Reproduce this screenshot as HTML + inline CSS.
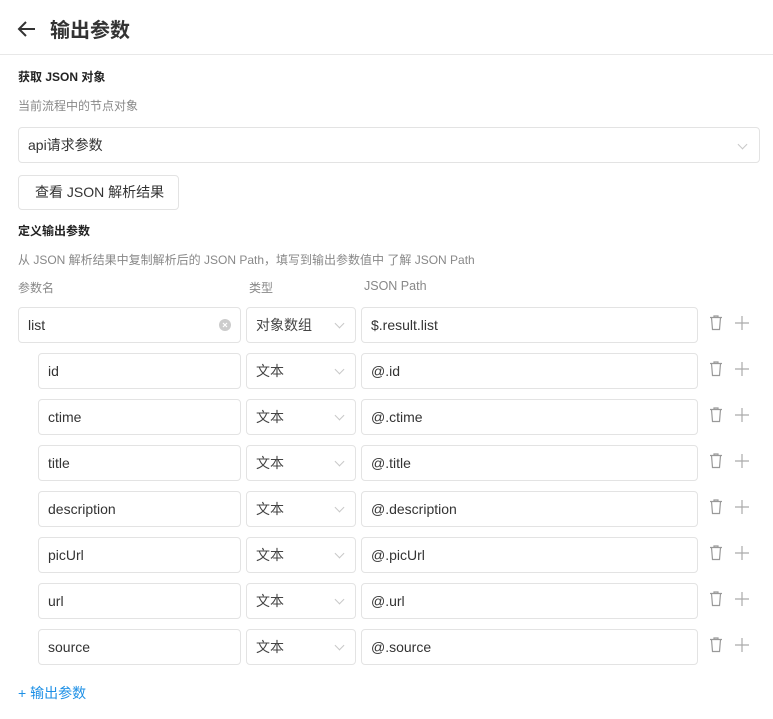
<!DOCTYPE html>
<html><head><meta charset="utf-8"><style>
*{box-sizing:border-box;margin:0;padding:0}
body{width:773px;height:719px;background:#fff;font-family:"Liberation Sans","Noto Sans CJK SC",sans-serif;color:#333;position:relative;overflow:hidden}
.a{position:absolute}
.box{position:absolute;border:1px solid #e3e3e3;border-radius:4px;height:36px;font-size:14px;line-height:34px;padding-left:9px;color:#333}
.chev{position:absolute;right:10px;top:13px;width:7px;height:7px;border-right:1px solid #c8c8c8;border-bottom:1px solid #c8c8c8;transform:rotate(45deg)}
.lbl{font-size:12px;color:#888}
</style></head><body>
<svg class="a" style="left:16px;top:18px" width="22" height="22" viewBox="0 0 22 22"><path d="M19 11H4M10 4L3 11l7 7" fill="none" stroke="#333" stroke-width="2"/></svg>
<div class="a" style="left:50px;top:14px;font-size:20px;font-weight:bold;color:#333">输出参数</div>
<div class="a" style="left:0;top:54px;width:773px;height:1px;background:#e8e8e8"></div>
<div class="a" style="left:18px;top:68px;font-size:12px;font-weight:bold;color:#222">获取 JSON 对象</div>
<div class="a lbl" style="left:18px;top:97px">当前流程中的节点对象</div>
<div class="box" style="left:18px;top:127px;width:742px;height:36px">api请求参数<span class="chev" style="right:13px"></span></div>
<div class="box" style="left:18px;top:175px;width:161px;height:35px;line-height:33px;padding-left:16px">查看 JSON 解析结果</div>
<div class="a" style="left:18px;top:222px;font-size:12px;font-weight:bold;color:#222">定义输出参数</div>
<div class="a lbl" style="left:18px;top:251px">从 JSON 解析结果中复制解析后的 JSON Path，填写到输出参数值中 了解 JSON Path</div>
<div class="a lbl" style="left:18px;top:279px">参数名</div>
<div class="a lbl" style="left:249px;top:279px">类型</div>
<div class="a lbl" style="left:364px;top:279px;font-size:12.5px">JSON Path</div>
<div id="rows"></div>
<div class="a" style="left:18px;top:683px;font-size:14px;color:#1e90e6">+ 输出参数</div>
<script>
var r=[["list","对象数组","$.result.list"],["id","文本","@.id"],["ctime","文本","@.ctime"],["title","文本","@.title"],["description","文本","@.description"],["picUrl","文本","@.picUrl"],["url","文本","@.url"],["source","文本","@.source"]];
var h="";
r.forEach(function(x,i){var y=307+i*46;var l=i?38:18;
h+='<div class="box" style="left:'+l+'px;top:'+y+'px;width:'+(241-l)+'px">'+x[0]+(i?'':'<svg class="a" style="right:9px;top:11px" width="12" height="12" viewBox="0 0 12 12"><circle cx="6" cy="6" r="6" fill="#ccc"/><path d="M4 4l4 4M8 4l-4 4" stroke="#fff" stroke-width="1.2"/></svg>')+'</div>';
h+='<div class="box" style="left:246px;top:'+y+'px;width:110px;color:#444">'+x[1]+'<span class="chev" style="right:12px;top:12px"></span></div>';
h+='<div class="box" style="left:361px;top:'+y+'px;width:337px">'+x[2]+'</div>';
h+='<svg class="a" style="left:709px;top:'+(y+8)+'px" width="14" height="16" viewBox="0 0 14 16"><path d="M1 2.5h12M5 2.5V1h4v1.5M2.5 2.5l1 12h7l1-12" fill="none" stroke="#999" stroke-width="1.2"/></svg>';
h+='<svg class="a" style="left:735px;top:'+(y+9)+'px" width="14" height="14" viewBox="0 0 14 14"><path d="M7 0v14M0 7h14" stroke="#aaa" stroke-width="1.2"/></svg>';});
document.getElementById("rows").innerHTML=h;
</script>
</body></html>
